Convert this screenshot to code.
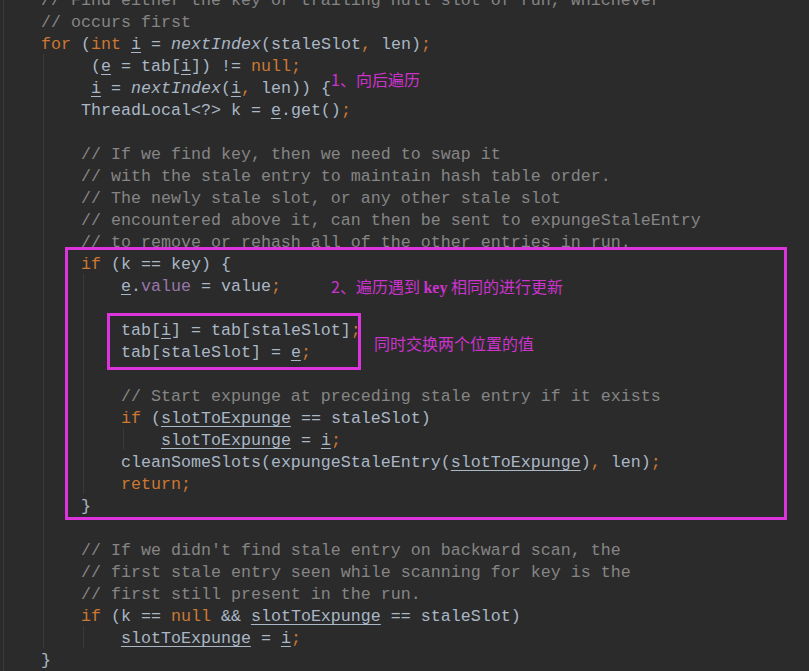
import React from "react";

const K = ({ children }: { children: React.ReactNode }) => (
  <span className="text-[#cc7832]">{children}</span>
);
const C = ({ children }: { children: React.ReactNode }) => (
  <span className="text-[#858585]">{children}</span>
);
const U = ({ children }: { children: React.ReactNode }) => (
  <span className="underline decoration-1 underline-offset-[3px]">{children}</span>
);
const I = ({ children }: { children: React.ReactNode }) => (
  <span className="italic">{children}</span>
);
const P = ({ children }: { children: React.ReactNode }) => (
  <span className="text-[#9876aa]">{children}</span>
);

const Line = ({ children }: { children?: React.ReactNode }) => (
  <div className="h-[22px] leading-[22px] whitespace-pre">{children ?? " "}</div>
);

export default function App() {
  return (
    <div className="relative w-[809px] h-[671px] overflow-hidden bg-[#2b2b2b]">
      {/* indent guides */}
      <div className="absolute left-[3px] top-0 h-full w-px bg-[#3a3a3a]" />
      <div className="absolute left-[43px] top-[54px] h-[594px] w-px bg-[#3a3a3a]" />
      <div className="absolute left-[83px] top-[274px] h-[220px] w-px bg-[#3a3a3a]" />
      <div className="absolute left-[123px] top-[428px] h-[22px] w-px bg-[#3a3a3a]" />
      <div className="absolute left-[83px] top-[626px] h-[22px] w-px bg-[#3a3a3a]" />

      <div
        className="relative mt-[-10px] pl-[1px] text-[16.67px] text-[#a9b7c6]"
        style={{ fontFamily: '"Liberation Mono", "Courier New", monospace' }}
      >
        <Line>
          <C>{"    // Find either the key or trailing null slot of run, whichever"}</C>
        </Line>
        <Line>
          <C>{"    // occurs first"}</C>
        </Line>
        <Line>
          {"    "}
          <K>for</K> (<K>int</K> <U>i</U> = <I>nextIndex</I>(staleSlot<K>,</K> len)<K>;</K>
        </Line>
        <Line>
          {"         "}(<U>e</U> = tab[<U>i</U>]) != <K>null;</K>
        </Line>
        <Line>
          {"         "}
          <U>i</U> = <I>nextIndex</I>(<U>i</U>
          <K>,</K> len)) {"{"}
        </Line>
        <Line>
          {"        "}ThreadLocal&lt;?&gt; k = <U>e</U>.get()<K>;</K>
        </Line>
        <Line />
        <Line>
          <C>{"        // If we find key, then we need to swap it"}</C>
        </Line>
        <Line>
          <C>{"        // with the stale entry to maintain hash table order."}</C>
        </Line>
        <Line>
          <C>{"        // The newly stale slot, or any other stale slot"}</C>
        </Line>
        <Line>
          <C>{"        // encountered above it, can then be sent to expungeStaleEntry"}</C>
        </Line>
        <Line>
          <C>{"        // to remove or rehash all of the other entries in run."}</C>
        </Line>
        <Line>
          {"        "}
          <K>if</K> (k == key) {"{"}
        </Line>
        <Line>
          {"            "}
          <U>e</U>.<P>value</P> = value<K>;</K>
        </Line>
        <Line />
        <Line>
          {"            "}tab[<U>i</U>] = tab[staleSlot]<K>;</K>
        </Line>
        <Line>
          {"            "}tab[staleSlot] = <U>e</U>
          <K>;</K>
        </Line>
        <Line />
        <Line>
          <C>{"            // Start expunge at preceding stale entry if it exists"}</C>
        </Line>
        <Line>
          {"            "}
          <K>if</K> (<U>slotToExpunge</U> == staleSlot)
        </Line>
        <Line>
          {"                "}
          <U>slotToExpunge</U> = <U>i</U>
          <K>;</K>
        </Line>
        <Line>
          {"            "}cleanSomeSlots(expungeStaleEntry(<U>slotToExpunge</U>)<K>,</K> len)<K>;</K>
        </Line>
        <Line>
          {"            "}
          <K>return;</K>
        </Line>
        <Line>{"        }"}</Line>
        <Line />
        <Line>
          <C>{"        // If we didn't find stale entry on backward scan, the"}</C>
        </Line>
        <Line>
          <C>{"        // first stale entry seen while scanning for key is the"}</C>
        </Line>
        <Line>
          <C>{"        // first still present in the run."}</C>
        </Line>
        <Line>
          {"        "}
          <K>if</K> (k == <K>null</K> &amp;&amp; <U>slotToExpunge</U> == staleSlot)
        </Line>
        <Line>
          {"            "}
          <U>slotToExpunge</U> = <U>i</U>
          <K>;</K>
        </Line>
        <Line>{"    }"}</Line>
      </div>

      {/* highlight boxes */}
      <div className="absolute left-[65px] top-[247px] w-[722px] h-[273px] border-[3px] border-[#dd33dd]" />
      <div className="absolute left-[107px] top-[313px] w-[254px] h-[57px] border-[3px] border-[#dd33dd]" />

      {/* annotations */}
      <div
        className="absolute left-[331px] top-[68px] leading-[22px] text-[16px] text-[#cc33cc] whitespace-pre"
        style={{ fontFamily: '"Noto Sans CJK SC", "Liberation Serif", sans-serif' }}
      >
        1、向后遍历
      </div>
      <div
        className="absolute left-[331px] top-[275px] leading-[22px] text-[16px] text-[#cc33cc] whitespace-pre"
        style={{ fontFamily: '"Noto Sans CJK SC", "Liberation Serif", sans-serif' }}
      >
        2、遍历遇到 <span style={{ fontFamily: '"Liberation Serif", serif' }} className="font-bold">key</span> 相同的进行更新
      </div>
      <div
        className="absolute left-[374px] top-[332px] leading-[22px] text-[16px] text-[#cc33cc] whitespace-pre"
        style={{ fontFamily: '"Noto Sans CJK SC", sans-serif' }}
      >
        同时交换两个位置的值
      </div>
    </div>
  );
}
